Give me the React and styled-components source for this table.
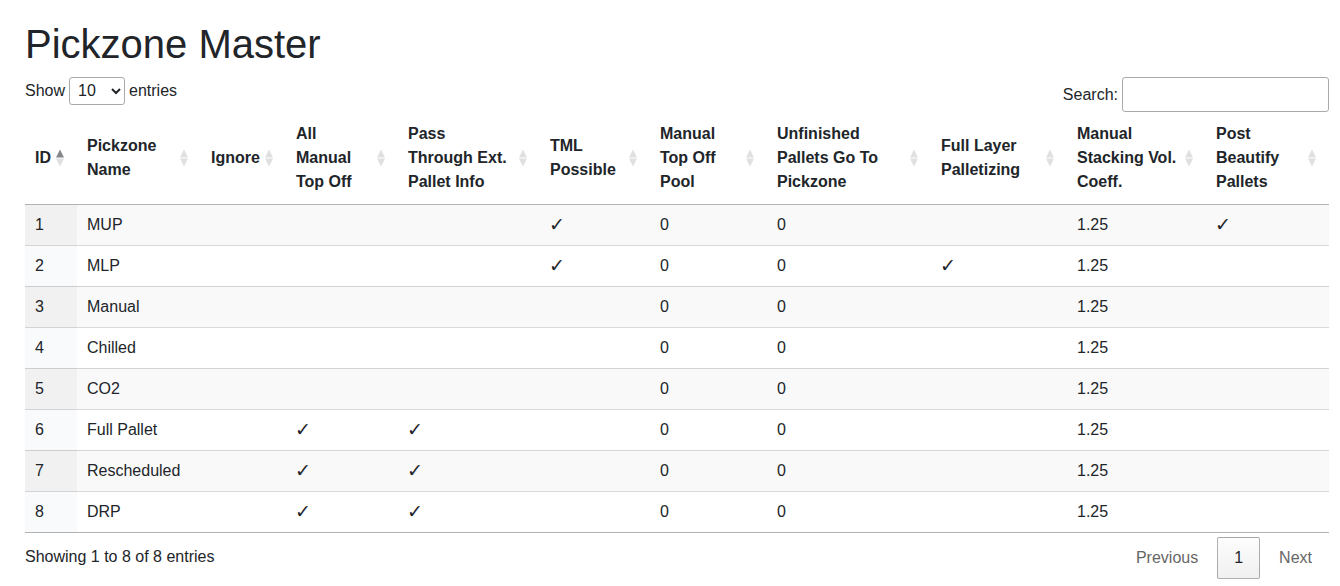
import React from "react";
import styled, { createGlobalStyle } from "styled-components";

const Global = createGlobalStyle`
  html, body { margin: 0; padding: 0; background: #fff; }
  body {
    font-family: "Liberation Sans", Arial, sans-serif;
    font-size: 16px;
    line-height: 1.5;
    color: #212529;
  }
  * { box-sizing: border-box; }
`;

const Page = styled.div`
  padding: 20px 11px 0 25px;
`;

const Title = styled.h1`
  margin: 0 0 8px;
  font-size: 40px;
  font-weight: 400;
  line-height: 48px;
`;

const Toolbar = styled.div`
  display: flex;
  justify-content: space-between;
  align-items: flex-start;
`;

const LengthLabel = styled.label`
  display: flex;
  align-items: center;
  gap: 4px;
  height: 28px;
  padding-top: 1px;
`;

const Select = styled.select`
  width: 56px;
  height: 28px;
  padding: 0 4px;
  font-family: inherit;
  font-size: 16px;
  color: #212529;
  border: 1px solid #aaa;
  border-radius: 3px;
  background: transparent;
`;

const FilterLabel = styled.label`
  display: flex;
  align-items: center;
  gap: 4px;
  padding-top: 1px;
`;

const SearchInput = styled.input`
  width: 207px;
  height: 35px;
  padding: 5px;
  font-family: inherit;
  font-size: 16px;
  border: 1px solid #aaa;
  border-radius: 3px;
  background: transparent;
`;

const Table = styled.table`
  width: 100%;
  table-layout: fixed;
  border-collapse: separate;
  border-spacing: 0;
  border-bottom: 1px solid rgba(0, 0, 0, 0.3);
`;

const HeadCell = styled.th`
  position: relative;
  text-align: left;
  vertical-align: middle;
  font-weight: 700;
  padding: 10px 26px 10px 10px;
  border-bottom: 1px solid rgba(0, 0, 0, 0.3);
  white-space: nowrap;
`;

const SortIcon = styled.span`
  position: absolute;
  right: 13px;
  top: 50%;
  transform: translateY(-50%);
  display: flex;
  flex-direction: column;
  align-items: center;
  gap: 1px;
`;

const Arrow = styled.span`
  width: 0;
  height: 0;
  border-left: 4px solid transparent;
  border-right: 4px solid transparent;
  ${(p) =>
    p.$up
      ? `border-bottom: 8px solid ${p.$active ? "rgba(33,37,41,0.55)" : "rgba(33,37,41,0.14)"};`
      : `border-top: 8px solid ${p.$active ? "rgba(33,37,41,0.55)" : "rgba(33,37,41,0.14)"};`}
`;

const Row = styled.tr`
  background: ${(p) => (p.$odd ? "#f9f9f9" : "#fff")};
`;

const Cell = styled.td`
  height: ${(p) => (p.$first ? "40px" : "41px")};
  padding: 8px 10px;
  line-height: 24px;
  border-top: ${(p) => (p.$first ? "none" : "1px solid rgba(0,0,0,0.15)")};
  background: ${(p) =>
    p.$sorted ? (p.$odd ? "#f1f1f1" : "#f9fafc") : "transparent"};
  white-space: nowrap;
`;

const Check = styled.span`
  display: inline-block;
  font-family: "DejaVu Sans", sans-serif;
  font-size: 19px;
  font-weight: 700;
  line-height: 1;
  vertical-align: -1px;
  margin-left: -1px;
`;

const Footer = styled.div`
  display: flex;
  justify-content: space-between;
  align-items: flex-start;
`;

const Info = styled.div`
  padding-top: 12px;
`;

const Paginate = styled.div`
  display: flex;
  padding-top: 4px;
`;

const PageButton = styled.span`
  display: inline-block;
  min-width: 1.5em;
  margin-left: 2px;
  padding: 8px 16px;
  text-align: center;
  border-radius: 2px;
  border: 1px solid ${(p) => (p.$current ? "rgba(0,0,0,0.3)" : "transparent")};
  background: ${(p) =>
    p.$current ? "linear-gradient(to bottom, #fdfdfd 0%, #f0f0f0 100%)" : "transparent"};
  color: ${(p) => (p.$disabled ? "#666" : "inherit")};
`;

const columns = [
  { w: 52, lines: ["ID"], active: true },
  { w: 124, lines: ["Pickzone", "Name"] },
  { w: 85, lines: ["Ignore"] },
  { w: 112, lines: ["All", "Manual", "Top Off"] },
  { w: 142, lines: ["Pass", "Through Ext.", "Pallet Info"] },
  { w: 110, lines: ["TML", "Possible"] },
  { w: 117, lines: ["Manual", "Top Off", "Pool"] },
  { w: 164, lines: ["Unfinished", "Pallets Go To", "Pickzone"] },
  { w: 136, lines: ["Full Layer", "Palletizing"] },
  { w: 139, lines: ["Manual", "Stacking Vol.", "Coeff."] },
  { w: 123, lines: ["Post", "Beautify", "Pallets"] },
];

const C = "✓";
const rows = [
  [1, "MUP", "", "", "", C, "0", "0", "", "1.25", C],
  [2, "MLP", "", "", "", C, "0", "0", C, "1.25", ""],
  [3, "Manual", "", "", "", "", "0", "0", "", "1.25", ""],
  [4, "Chilled", "", "", "", "", "0", "0", "", "1.25", ""],
  [5, "CO2", "", "", "", "", "0", "0", "", "1.25", ""],
  [6, "Full Pallet", "", C, C, "", "0", "0", "", "1.25", ""],
  [7, "Rescheduled", "", C, C, "", "0", "0", "", "1.25", ""],
  [8, "DRP", "", C, C, "", "0", "0", "", "1.25", ""],
];

export default function App() {
  return (
    <Page>
      <Global />
      <Title>Pickzone Master</Title>
      <Toolbar>
        <LengthLabel>
          Show
          <Select defaultValue="10">
            <option value="10">10</option>
            <option value="25">25</option>
            <option value="50">50</option>
            <option value="100">100</option>
          </Select>
          entries
        </LengthLabel>
        <FilterLabel>
          Search:
          <SearchInput type="search" />
        </FilterLabel>
      </Toolbar>
      <Table>
        <colgroup>
          {columns.map((c, i) => (
            <col key={i} style={{ width: c.w }} />
          ))}
        </colgroup>
        <thead>
          <tr>
            {columns.map((c, i) => (
              <HeadCell key={i}>
                {c.lines.map((l, j) => (
                  <React.Fragment key={j}>
                    {j > 0 && <br />}
                    {l}
                  </React.Fragment>
                ))}
                <SortIcon>
                  <Arrow $up $active={c.active} />
                  <Arrow />
                </SortIcon>
              </HeadCell>
            ))}
          </tr>
        </thead>
        <tbody>
          {rows.map((r, i) => {
            const odd = i % 2 === 0;
            return (
              <Row key={i} $odd={odd}>
                {r.map((v, j) => (
                  <Cell key={j} $first={i === 0} $sorted={j === 0} $odd={odd}>
                    {v === C ? <Check>{C}</Check> : v}
                  </Cell>
                ))}
              </Row>
            );
          })}
        </tbody>
      </Table>
      <Footer>
        <Info>Showing 1 to 8 of 8 entries</Info>
        <Paginate>
          <PageButton $disabled>Previous</PageButton>
          <PageButton $current>1</PageButton>
          <PageButton $disabled>Next</PageButton>
        </Paginate>
      </Footer>
    </Page>
  );
}
